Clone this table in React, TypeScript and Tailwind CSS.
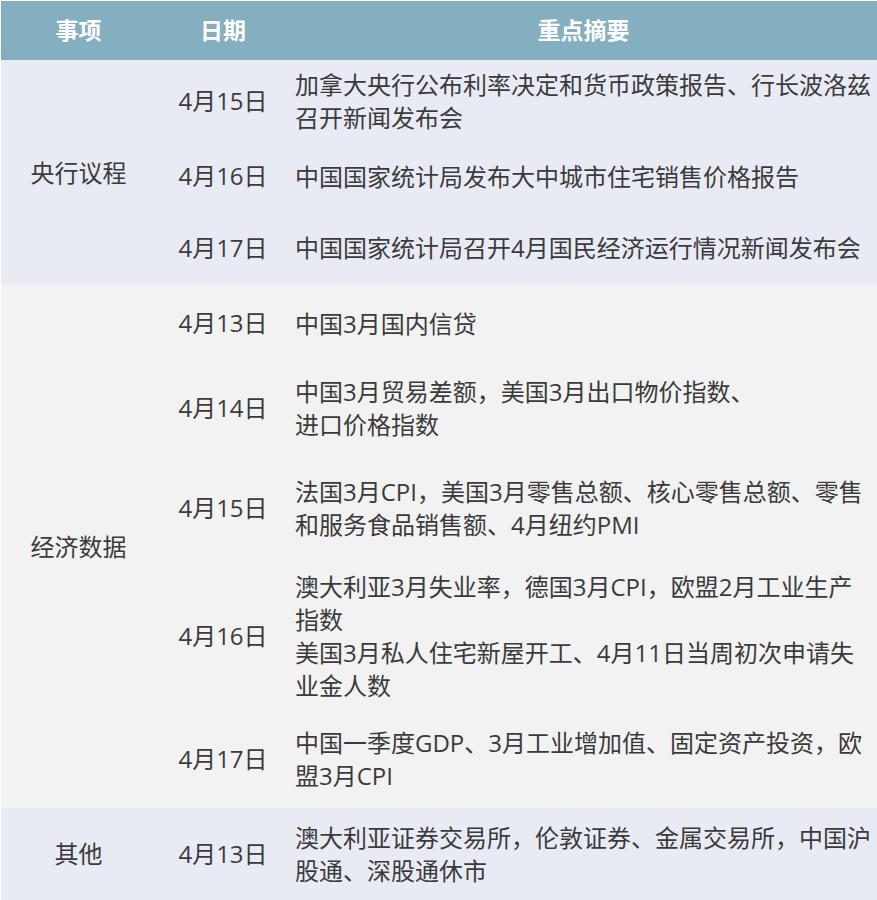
import React from "react";

type Row = { date: string; lines: string[]; h: string };
type Group = { label: string; bg: string; rows: Row[] };

const groups: Group[] = [
  {
    label: "央行议程",
    bg: "bg-[#e9ebf4]",
    rows: [
      {
        date: "4月15日",
        lines: ["加拿大央行公布利率决定和货币政策报告、行长波洛兹", "召开新闻发布会"],
        h: "h-[82px]",
      },
      { date: "4月16日", lines: ["中国国家统计局发布大中城市住宅销售价格报告"], h: "h-[68px]" },
      { date: "4月17日", lines: ["中国国家统计局召开4月国民经济运行情况新闻发布会"], h: "h-[75px]" },
    ],
  },
  {
    label: "经济数据",
    bg: "bg-[#f2f2f2]",
    rows: [
      { date: "4月13日", lines: ["中国3月国内信贷"], h: "h-[76px]" },
      {
        date: "4月14日",
        lines: ["中国3月贸易差额，美国3月出口物价指数、", "进口价格指数"],
        h: "h-[93px]",
      },
      {
        date: "4月15日",
        lines: ["法国3月CPI，美国3月零售总额、核心零售总额、零售", "和服务食品销售额、4月纽约PMI"],
        h: "h-[108px]",
      },
      {
        date: "4月16日",
        lines: [
          "澳大利亚3月失业率，德国3月CPI，欧盟2月工业生产",
          "指数",
          "美国3月私人住宅新屋开工、4月11日当周初次申请失",
          "业金人数",
        ],
        h: "h-[148px]",
      },
      {
        date: "4月17日",
        lines: ["中国一季度GDP、3月工业增加值、固定资产投资，欧", "盟3月CPI"],
        h: "h-[98px]",
      },
    ],
  },
  {
    label: "其他",
    bg: "bg-[#e9ebf4]",
    rows: [
      {
        date: "4月13日",
        lines: ["澳大利亚证券交易所，伦敦证券、金属交易所，中国沪", "股通、深股通休市"],
        h: "h-[92px]",
      },
    ],
  },
];

const App = () => {
  return (
    <div className="min-h-screen w-full bg-white pl-px pt-px font-['Open_Sans','Noto_Sans_CJK_SC',sans-serif] text-[24px] text-[#3b3b3b]">
      <div className="grid h-[59px] grid-cols-[155px_134px_1fr] items-center bg-[#84afc1] text-[23px] font-bold text-white">
        <div className="text-center">事项</div>
        <div className="text-center">日期</div>
        <div className="text-center">重点摘要</div>
      </div>

      {groups.map((g) => (
        <div key={g.label} className={`grid grid-cols-[155px_1fr] ${g.bg}`}>
          <div className="flex items-center justify-center">{g.label}</div>
          <div>
            {g.rows.map((r, i) => (
              <div key={i} className={`grid grid-cols-[134px_1fr] items-center ${r.h}`}>
                <div className="text-center">{r.date}</div>
                <div className="pl-[5px] leading-[33px]">
                  {r.lines.map((l, j) => (
                    <div key={j} className="whitespace-nowrap">
                      {l}
                    </div>
                  ))}
                </div>
              </div>
            ))}
          </div>
        </div>
      ))}
    </div>
  );
};

export default App;
